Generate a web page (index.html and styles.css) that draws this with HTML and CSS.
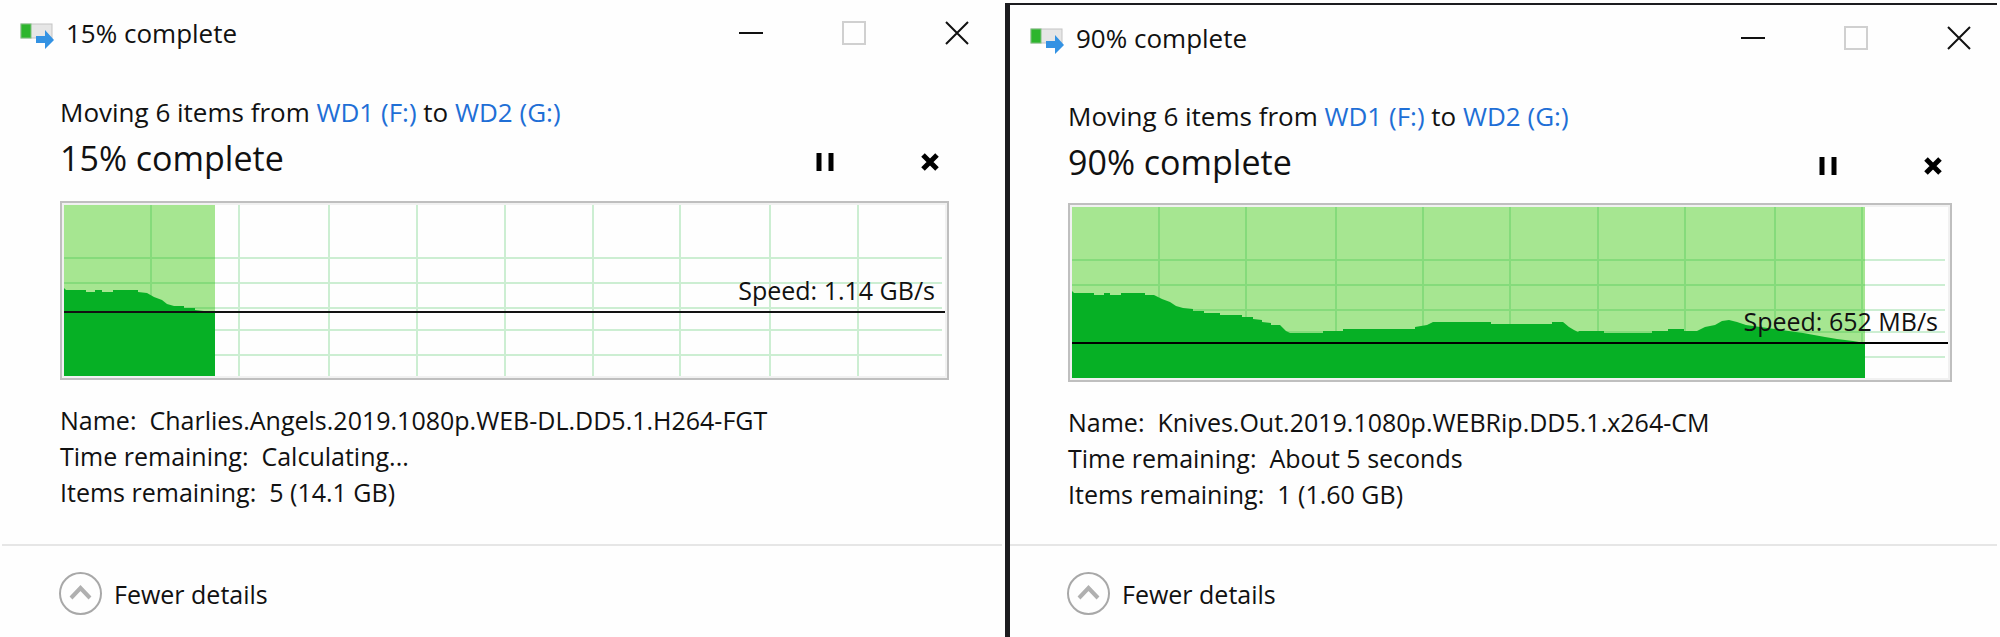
FILE: index.html
```
<!DOCTYPE html>
<html lang="en">
<head>
    <meta charset="UTF-8">
    <meta name="viewport" content="width=device-width, initial-scale=1.0">
    <title>File transfer</title>
    <link rel="stylesheet" href="styles.css">
</head>
<body>

    <!-- First transfer -->
    <section class="window">
        <header class="titlebar">
            <svg class="app-icon" width="34" height="26" viewBox="0 0 34 26">
                <rect x="1" y="1" width="31" height="14" fill="#e6e6e6" stroke="#c4c4c4"/>
                <rect x="1" y="1" width="10" height="14" fill="#2db52d" stroke="#7fbf7f"/>
                <path d="M16 13h9V7l9 10-9 9v-6h-9z" fill="#3392e3"/>
            </svg>
            <span class="title">15% complete</span>
            <div class="controls">
                <button type="button" aria-label="Minimize"><svg width="24" height="24" viewBox="0 0 24 24"><path d="M0 12h24" stroke="#111" stroke-width="2"/></svg></button>
                <button type="button" aria-label="Maximize" disabled><svg width="24" height="24" viewBox="0 0 24 24"><rect x="1" y="1" width="22" height="22" fill="none" stroke="#d0d0d0" stroke-width="2"/></svg></button>
                <button type="button" aria-label="Close"><svg width="24" height="24" viewBox="0 0 24 24"><path d="M1 1l22 22M23 1L1 23" stroke="#111" stroke-width="2"/></svg></button>
            </div>
        </header>

        <main class="content">
            <p class="summary">Moving 6 items from <a href="#">WD1 (F:)</a> to <a href="#">WD2 (G:)</a></p>
            <div class="status">
                <h1>15% complete</h1>
                <div class="actions">
                    <button type="button" aria-label="Pause"><svg width="18" height="18" viewBox="0 0 18 18"><path d="M3 0v18M15 0v18" stroke="#000" stroke-width="5"/></svg></button>
                    <button type="button" aria-label="Cancel"><svg width="18" height="18" viewBox="0 0 18 18"><path d="M2 2l14 14M16 2L2 16" stroke="#000" stroke-width="5"/></svg></button>
                </div>
            </div>

            <div class="chart">
                <svg class="graph" viewBox="0 0 881 171" preserveAspectRatio="none">
                    <rect width="151" height="171" fill="#a6e691"/>
                    <path class="grid" d="M87 0v171M175 0v171M265 0v171M353 0v171M441 0v171M529 0v171M616 0v171M706 0v171M794 0v171M0 53h878M0 78h878M0 103h878M0 125h878M0 150h878"/>
                    <path fill="#06b025" d="M0 171V83l2 2h20v2h9v-2h7v2h11v-2h25v2l9 1 7 4 8 3 5 4 7 2h10v2h11v2l9 1h11V171z"/>
                    <path d="M0 107h881" stroke="#111" stroke-width="2"/>
                </svg>
                <span class="speed speed-high">Speed: 1.14 GB/s</span>
            </div>

            <dl class="details">
                <div><dt>Name:</dt><dd>Charlies.Angels.2019.1080p.WEB-DL.DD5.1.H264-FGT</dd></div>
                <div><dt>Time remaining:</dt><dd>Calculating...</dd></div>
                <div><dt>Items remaining:</dt><dd>5 (14.1 GB)</dd></div>
            </dl>
        </main>

        <footer class="footer">
            <button type="button" class="toggle">
                <svg width="43" height="43" viewBox="0 0 43 43" fill="none"><circle cx="21.5" cy="21.5" r="20.5" stroke="#a8a8a8" stroke-width="2"/><path d="M12 26l9.5-10 9.5 10" stroke="#b0b0b0" stroke-width="4"/></svg>
                Fewer details
            </button>
        </footer>
    </section>

    <!-- Second transfer -->
    <section class="window window-front">
        <header class="titlebar">
            <svg class="app-icon" width="34" height="26" viewBox="0 0 34 26">
                <rect x="1" y="1" width="31" height="14" fill="#e6e6e6" stroke="#c4c4c4"/>
                <rect x="1" y="1" width="10" height="14" fill="#2db52d" stroke="#7fbf7f"/>
                <path d="M16 13h9V7l9 10-9 9v-6h-9z" fill="#3392e3"/>
            </svg>
            <span class="title">90% complete</span>
            <div class="controls">
                <button type="button" aria-label="Minimize"><svg width="24" height="24" viewBox="0 0 24 24"><path d="M0 12h24" stroke="#111" stroke-width="2"/></svg></button>
                <button type="button" aria-label="Maximize" disabled><svg width="24" height="24" viewBox="0 0 24 24"><rect x="1" y="1" width="22" height="22" fill="none" stroke="#d0d0d0" stroke-width="2"/></svg></button>
                <button type="button" aria-label="Close"><svg width="24" height="24" viewBox="0 0 24 24"><path d="M1 1l22 22M23 1L1 23" stroke="#111" stroke-width="2"/></svg></button>
            </div>
        </header>

        <main class="content">
            <p class="summary">Moving 6 items from <a href="#">WD1 (F:)</a> to <a href="#">WD2 (G:)</a></p>
            <div class="status">
                <h1>90% complete</h1>
                <div class="actions">
                    <button type="button" aria-label="Pause"><svg width="18" height="18" viewBox="0 0 18 18"><path d="M3 0v18M15 0v18" stroke="#000" stroke-width="5"/></svg></button>
                    <button type="button" aria-label="Cancel"><svg width="18" height="18" viewBox="0 0 18 18"><path d="M2 2l14 14M16 2L2 16" stroke="#000" stroke-width="5"/></svg></button>
                </div>
            </div>

            <div class="chart">
                <svg class="graph" viewBox="0 0 876 171" preserveAspectRatio="none">
                    <rect width="793" height="171" fill="#a6e691"/>
                    <path class="grid" d="M87 0v171M174 0v171M264 0v171M351 0v171M438 0v171M526 0v171M613 0v171M703 0v171M790 0v171M0 53h873M0 78h873M0 103h873M0 125h873M0 150h873"/>
                    <path fill="#06b025" d="M0 171V84l2 2h20v2h10v-2h6v2h11v-2h24v2h9l8 4 8 3 6 4 7 2 10 1v2h11v2h16v2h22v2h11v2l9 1v2l9 1v2h9l6 6 4 2h33v-2h20v-2h72v-2l12-2 6-3h58v2h61v-2h11l6 5 5 3 4 2 1-1h25v2h48v-2h16v-2h16v2h13l8-4 10-2 7-4 7-1 8 2L674 118 731 126 753 130 765 132 781 134 793 136V171z"/>
                    <path d="M0 136h876" stroke="#000" stroke-width="2"/>
                </svg>
                <span class="speed speed-low">Speed: 652 MB/s</span>
            </div>

            <dl class="details">
                <div><dt>Name:</dt><dd>Knives.Out.2019.1080p.WEBRip.DD5.1.x264-CM</dd></div>
                <div><dt>Time remaining:</dt><dd>About 5 seconds</dd></div>
                <div><dt>Items remaining:</dt><dd>1 (1.60 GB)</dd></div>
            </dl>
        </main>

        <footer class="footer">
            <button type="button" class="toggle">
                <svg width="43" height="43" viewBox="0 0 43 43" fill="none"><circle cx="21.5" cy="21.5" r="20.5" stroke="#a8a8a8" stroke-width="2"/><path d="M12 26l9.5-10 9.5 10" stroke="#b0b0b0" stroke-width="4"/></svg>
                Fewer details
            </button>
        </footer>
    </section>

</body>
</html>
```
FILE: styles.css
```
* {
    box-sizing: border-box;
}
body {
    font-family: "Open Sans", "Noto Sans", sans-serif;
    font-size: 26px;
    line-height: 36px;
    color: #111;
    background: #fefefe;
    margin: 0;
    min-height: 100vh;
    display: grid;
    grid-template-columns: 201fr 199fr;
}
button {
    font: inherit;
    color: inherit;
    background: none;
    border: none;
    padding: 0;
    cursor: pointer;
}
svg {
    display: block;
}
/* Window */
.window {
    display: flex;
    flex-direction: column;
    min-width: 0;
}
.window-front {
    margin: 3px 3px 0 0;
    border-top: 2px solid #1c1c1f;
    border-left: 5px solid #1c1c1f;
}
/* Title bar */
.titlebar {
    display: flex;
    align-items: center;
    height: 66px;
    padding: 0 10px 0 20px;
}
.app-icon {
    margin: 6px 12px 0 0;
}
.controls {
    display: flex;
    gap: 27px;
    margin-left: auto;
}
.controls button {
    display: flex;
    justify-content: center;
    width: 76px;
}
.window-front .titlebar {
    padding-right: 0;
}
/* Content */
.content {
    flex: 1;
    padding: 28px 56px 0 60px;
}
.window-front .content {
    padding: 27px 45px 0 58px;
}
.summary {
    margin: 0 0 8px;
}
.summary a {
    color: #1f6fd6;
    text-decoration: none;
}
.status {
    display: flex;
    justify-content: space-between;
    align-items: flex-end;
    margin-bottom: 23px;
}
.window-front .status {
    margin-bottom: 21px;
}
.status h1 {
    margin: 0;
    font-size: 34px;
    font-weight: normal;
    line-height: 40px;
}
.actions {
    display: flex;
    gap: 67px;
}
.actions button {
    display: flex;
    justify-content: center;
    align-items: center;
    width: 38px;
    height: 32px;
}
/* Speed graph */
.chart {
    position: relative;
    padding: 2px;
    background: #f1f1f1;
    border: 2px solid #bfbfbf;
    margin-bottom: 22px;
}
.graph {
    width: 100%;
    height: 171px;
    background: #fefefe;
}
.grid {
    fill: none;
    stroke: rgba(6, 176, 37, 0.2);
    stroke-width: 2px;
}
.speed {
    position: absolute;
    right: 12px;
    font-size: 25px;
}
.speed-high {
    bottom: 70px;
}
.speed-low {
    bottom: 41px;
}
/* Details */
.details {
    margin: 0;
    font-size: 25px;
}
.details div {
    display: flex;
    gap: 13px;
}
.details dd {
    margin: 0;
}
/* Footer */
.footer {
    height: 93px;
    margin: 0 3px 0 2px;
    padding: 26px 0 0 57px;
    border-top: 2px solid #e6e6e6;
}
.window-front .footer {
    margin: 0;
}
.toggle {
    display: flex;
    align-items: center;
    gap: 12px;
    font-size: 25px;
}
```
